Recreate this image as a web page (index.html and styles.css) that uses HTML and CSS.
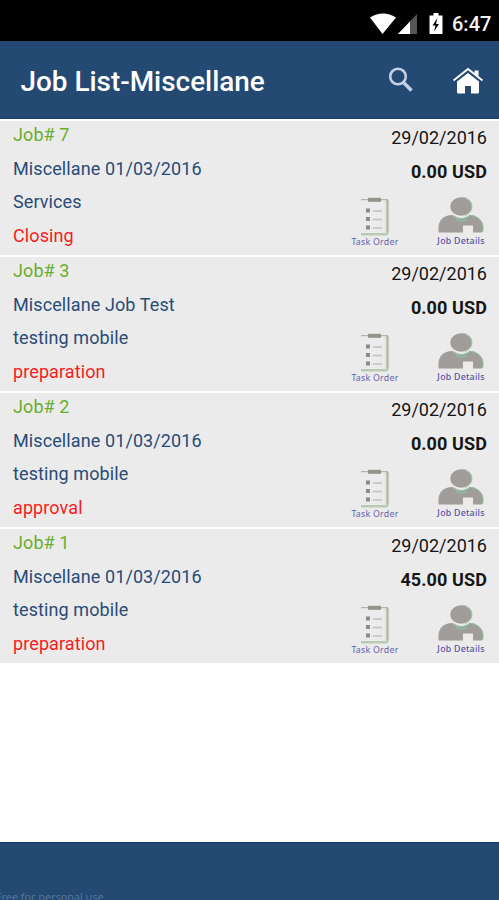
FILE: index.html
```
<!DOCTYPE html>
<html lang="en">
<head>
<meta charset="utf-8">
<title>Job List</title>
<link rel="stylesheet" href="styles.css">
</head>
<body>
<svg class="defs" width="0" height="0">
  <symbol id="task" viewBox="0 0 30 40">
    <path d="M1 37.200h26V3" fill="none" stroke="#bccab3" stroke-width="2.400"/>
    <path d="M1 2.700h27v33" fill="none" stroke="#a6aaa0" stroke-width="1"/>
    <path d="M8 .8h13v4H8z" fill="#94948c"/>
    <path d="M6 11.500h4v4H6zM6 20h4v4H6zM6 28.500h4v4H6z" fill="#849080"/>
    <path d="M13 14h9M13 22.500h9M13 31h9" stroke="#bdc4b9" stroke-width="1.500"/>
  </symbol>
  <symbol id="person" viewBox="0 0 46 36">
    <path d="M.5 35.500V31C.5 23 6 18 14 18q9 7 18 0c8 0 13 6 13 12v3.500q0 2-2 2h-8V28.500H25v7z" fill="#a09c99"/>
    <path d="M33 18.500c7 1 12 6 12 11.500v3q0 2-2 2" fill="none" stroke="#8fc3a0"/>
    <path d="M15 18.500q8 6.500 17 0M18 23q6 2 11 0" fill="none" stroke="#94c4a2" stroke-width="1.200"/>
    <ellipse cx="23" cy="9.500" rx="10.800" ry="9.200" fill="#a09c99"/>
    <path d="M25 .4c11 1 12 15 2 18" fill="none" stroke="#8fc3a0" stroke-width=".9"/>
  </symbol>
</svg>
<div class="status">
  <svg width="120" height="41" viewBox="379 0 120 41">
    <path d="M370 17.500q13-8 26 0L382.500 34z" fill="#fff"/>
    <path d="M417 14v20h-19z" fill="#555"/>
    <path d="M410 21.500V34h-12z" fill="#fff"/>
    <path d="M429.500 15.500h4V13h5v2.500h4V34h-13z" fill="#fff"/>
    <path d="M437.500 18l-5 7.500h3l-1.500 6 5-7.500h-3z" fill="#000"/>
  </svg>
  <span class="clock">6:47</span>
</div>
<header class="bar">
  <h1>Job List-Miscellane</h1>
  <svg class="search" width="28" height="28" viewBox="0 0 28 28" fill="none" stroke="#c3d2e7">
    <circle cx="11" cy="10.500" r="7.800" stroke-width="2.600"/><path d="M16.500 16.500l8 8" stroke-width="3.600"/>
  </svg>
  <svg class="home" width="32" height="28" viewBox="0 0 32 28">
    <path d="M1.500 13.500L16 2l14.500 11.500" fill="none" stroke="#fff" stroke-width="1.800"/>
    <path d="M22.500 3.500h4v6.300L22.500 7z" fill="#fff"/>
    <path d="M5 14.500L16 6l11 8.500V25q0 1.500-1.500 1.500H19V19h-6v7.500H6.500Q5 26.500 5 25z" fill="#fff"/>
  </svg>
</header>
<main class="list">
  <article class="job">
    <div class="info"><p class="num">Job# 7</p><p>Miscellane 01/03/2016</p><p>Services</p><p class="state">Closing</p></div>
    <div class="side"><p>29/02/2016</p><p class="sum">0.00 USD</p>
      <div class="actions"><div class="task"><svg width="30" height="40"><use href="#task"/></svg><span>Task Order</span></div><div class="person"><svg width="46" height="36"><use href="#person"/></svg><span>Job Details</span></div></div></div>
  </article>
  <article class="job">
    <div class="info"><p class="num">Job# 3</p><p>Miscellane Job Test</p><p>testing mobile</p><p class="state">preparation</p></div>
    <div class="side"><p>29/02/2016</p><p class="sum">0.00 USD</p>
      <div class="actions"><div class="task"><svg width="30" height="40"><use href="#task"/></svg><span>Task Order</span></div><div class="person"><svg width="46" height="36"><use href="#person"/></svg><span>Job Details</span></div></div></div>
  </article>
  <article class="job">
    <div class="info"><p class="num">Job# 2</p><p>Miscellane 01/03/2016</p><p>testing mobile</p><p class="state">approval</p></div>
    <div class="side"><p>29/02/2016</p><p class="sum">0.00 USD</p>
      <div class="actions"><div class="task"><svg width="30" height="40"><use href="#task"/></svg><span>Task Order</span></div><div class="person"><svg width="46" height="36"><use href="#person"/></svg><span>Job Details</span></div></div></div>
  </article>
  <article class="job">
    <div class="info"><p class="num">Job# 1</p><p>Miscellane 01/03/2016</p><p>testing mobile</p><p class="state">preparation</p></div>
    <div class="side"><p>29/02/2016</p><p class="sum">45.00 USD</p>
      <div class="actions"><div class="task"><svg width="30" height="40"><use href="#task"/></svg><span>Task Order</span></div><div class="person"><svg width="46" height="36"><use href="#person"/></svg><span>Job Details</span></div></div></div>
  </article>
</main>
<footer class="foot">Free for personal use</footer>
</body>
</html>
```
FILE: styles.css
```
* { box-sizing: border-box; margin: 0; padding: 0; }
body { height: 900px; overflow: hidden; display: flex; flex-direction: column; background: #fff; font-family: Roboto, sans-serif; }
svg { display: block; overflow: visible; flex: none; }
.defs { position: absolute; }
.status { height: 41px; background: #000; display: flex; justify-content: flex-end; }
.status svg { margin-right: -47px; }
.clock { width: 47px; color: #f4f4f4; font-size: 20px; font-weight: 500; line-height: 49px; white-space: nowrap; }
.bar { height: 78px; background: #244a73; border-bottom: 1px solid #123d6b; display: flex; align-items: center; padding: 0 15px 0 20.5px; }
.bar h1 { flex: 1; margin-top: 3px; color: #fff; font-size: 27.9px; font-weight: 500; white-space: nowrap; }
.search { margin-right: 37px; }
.home { margin-top: 3px; }
.list { flex: none; padding-top: 2px; }
.job { height: 134px; margin-bottom: 2px; background: #ebebeb; display: flex; justify-content: space-between; padding: 0 12px 0 13px; font-size: 18px; color: #294b78; }
.job p { line-height: 33.7px; white-space: nowrap; }
.info { margin-top: -3px; letter-spacing: .1px; }
.info .num { color: #6aaf2b; }
.info .state { color: #f81c1c; }
.side { color: #161616; text-align: right; padding-top: .4px; }
.side .sum { font-weight: 700; letter-spacing: .1px; }
.actions { display: flex; justify-content: flex-end; align-items: flex-start; margin-top: 8px; margin-right: 1px; }
.actions div { width: 50px; display: flex; flex-direction: column; align-items: center; }
.actions .task { margin-right: 36px; }
.actions span { font: 8.8px/10px "Noto Sans", sans-serif; letter-spacing: .25px; color: #6462ad; white-space: nowrap; }
.actions .person span { font-weight: 500; color: #5553a8; }
.person svg { margin-bottom: 3px; }
.foot { flex: none; height: 58px; margin-top: auto; background: #244a73; border-top: 1px solid #0d3565; color: #54759a; font: 10.8px/14px "Noto Sans", sans-serif; padding-top: 47px; text-indent: -4px; overflow: hidden; }
```
